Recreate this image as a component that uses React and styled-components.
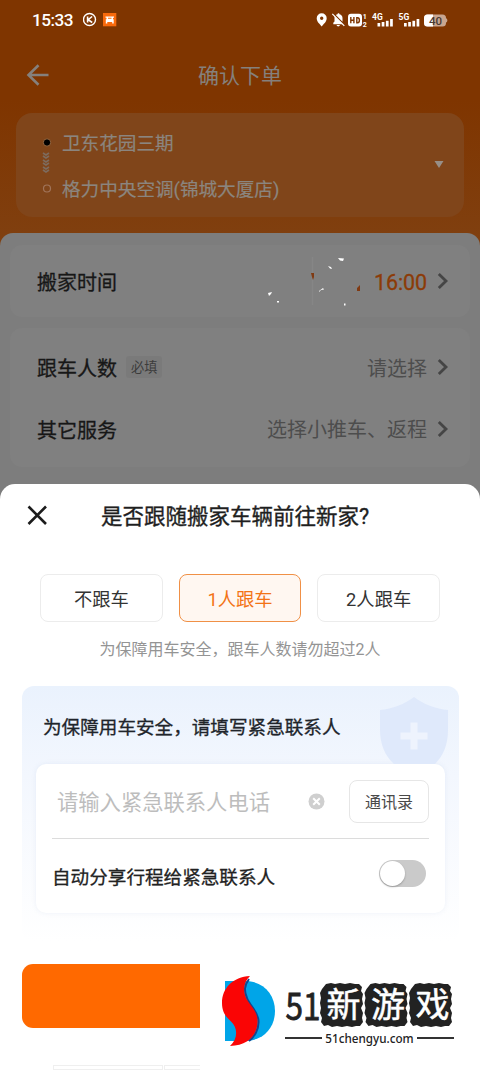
import React, { useState } from "react";
import styled, { createGlobalStyle } from "styled-components";

const GlobalStyle = createGlobalStyle`
  * {
    box-sizing: border-box;
  }
  body {
    margin: 0;
    font-family: Roboto, "Noto Sans CJK SC", sans-serif;
    background: #fff;
  }
  svg {
    display: block;
    flex: none;
  }
`;

const Screen = styled.div`
  position: relative;
  width: 480px;
  height: 1070px;
  overflow: hidden;
  background: linear-gradient(#7f3500 0, #7f3500 100px, #804010 245px, #7d7d7d 246px);
  display: flex;
  flex-direction: column;
  white-space: nowrap;
`;

const StatusBar = styled.div`
  height: 38px;
  padding: 1px 32px 0;
  display: flex;
  align-items: center;
  color: #fff;
`;

const Clock = styled.span`
  width: 51px;
  font-size: 17.2px;
  font-weight: 500;
  letter-spacing: -0.5px;
`;

const NavBar = styled.header`
  height: 75px;
  display: grid;
  grid-template-columns: 75px 1fr 75px;
  align-items: center;
  color: #85807c;
  svg {
    margin: -2px 0 0 26px;
  }
`;

const NavTitle = styled.h1`
  margin: 0;
  font-size: 21px;
  line-height: 30px;
  font-weight: 400;
  text-align: center;
`;

const AddressCard = styled.section`
  height: 104px;
  flex: none;
  margin: 0 16px;
  padding: 7px 20px 4px 26px;
  border-radius: 16px;
  background: #80451a;
  display: flex;
  align-items: center;
  color: #8b857f;
`;

const AddressList = styled.div`
  flex: 1;
  margin: 1px 0 0 10px;
  font-size: 18.6px;
  line-height: 46px;
  -webkit-text-stroke: 0.2px #8b857f;
`;

const Order = styled.main`
  flex: none;
  height: 260px;
  margin-top: 16px;
  padding: 12px 10px;
  border-radius: 13px 13px 0 0;
  background: #7d7d7d;
  display: flex;
  flex-direction: column;
  gap: 11px;
`;

const OrderCard = styled.div`
  border-radius: 12px;
  background: #808080;
  padding: ${(p) => p.$pad || "0"} 21px ${(p) => p.$pad || "0"} 27px;
`;

const OrderRow = styled.div`
  height: ${(p) => p.$height}px;
  display: flex;
  align-items: center;
`;

const Label = styled.span`
  padding-top: 4px;
  font-size: 20px;
  line-height: 30px;
  color: #171717;
  -webkit-text-stroke: 0.3px #171717;
`;

const Tag = styled.span`
  margin-left: 9px;
  padding: 0 5px;
  height: 22px;
  line-height: 23px;
  font-size: 13.2px;
  color: #3c3c3c;
  background: #7a7a7a;
  border-radius: 3px;
`;

const Value = styled.span`
  margin-left: auto;
  margin-right: 10px;
  display: flex;
  align-items: center;
  font-size: 20px;
  color: #4d4d4d;
`;

const Time = styled.span`
  margin-left: 9px;
  padding-top: 3px;
  width: 53px;
  font-size: 21.5px;
  line-height: 30px;
  letter-spacing: -0.1px;
  color: #8c3b07;
  -webkit-text-stroke: 0.3px #8c3b07;
`;

const Sheet = styled.section`
  position: absolute;
  left: 0;
  right: 0;
  top: 484px;
  bottom: 0;
  border-radius: 15px 15px 0 0;
  background: #fff;
`;

const SheetHeader = styled.div`
  height: 63px;
  padding-left: 27px;
  display: flex;
  align-items: center;
`;

const SheetTitle = styled.h2`
  margin: 3px 0 0 52px;
  font-size: 21.5px;
  line-height: 30px;
  font-weight: 400;
  color: #1f1f1f;
  -webkit-text-stroke: 0.35px #1f1f1f;
`;

const Choices = styled.div`
  margin: 27px 40px 0;
  display: grid;
  grid-template-columns: repeat(3, 1fr);
  gap: 16px;
`;

const Choice = styled.button`
  height: 48px;
  padding: 0;
  font: inherit;
  font-size: 18.3px;
  border-radius: 8px;
  border: 1px solid ${(p) => (p.$active ? "#f09046" : "#ececec")};
  background: ${(p) => (p.$active ? "#fff7f1" : "#fff")};
  color: ${(p) => (p.$active ? "#f37316" : "#333")};
`;

const Hint = styled.p`
  margin: 16px 0 0;
  text-align: center;
  font-size: 16px;
  line-height: 24px;
  color: #949494;
`;

const Contact = styled.div`
  margin: 24px 21px 0 22px;
  height: 256px;
  padding: 0 14px;
  border-radius: 12px;
  background: linear-gradient(#eaf2fd, #f3f7fe 35%, #fff);
  overflow: hidden;
`;

const ContactHeader = styled.div`
  height: 78px;
  padding-left: 7px;
  display: flex;
  align-items: center;
  justify-content: space-between;
  font-size: 18.6px;
  color: #20242a;
  -webkit-text-stroke: 0.3px #20242a;
  svg {
    align-self: flex-end;
    margin-right: -4px;
  }
`;

const ContactTitle = styled.span`
  padding-top: 1px;
`;

const ContactForm = styled.div`
  height: 149px;
  padding: 0 16px;
  border-radius: 10px;
  background: #fff;
  box-shadow: 0 0 5px rgba(120, 150, 200, 0.12);
`;

const PhoneRow = styled.div`
  height: 75px;
  padding-left: 5px;
  display: flex;
  align-items: center;
  border-bottom: 1px solid #dcdcdc;
`;

const Placeholder = styled.span`
  flex: 1;
  font-size: 21.3px;
  line-height: 30px;
  padding-top: 4px;
  color: #bdbdbd;
`;

const BookButton = styled.button`
  width: 80px;
  height: 43px;
  margin-left: 24px;
  padding: 0;
  font: inherit;
  font-size: 16px;
  color: #4a4a4a;
  background: #fff;
  border: 1px solid #e6e6e6;
  border-radius: 8px;
`;

const ShareRow = styled.div`
  height: 73px;
  padding: 0 3px 0 0;
  display: flex;
  align-items: center;
  justify-content: space-between;
  font-size: 18.6px;
  color: #222;
  -webkit-text-stroke: 0.3px #222;
`;

const Switch = styled.button`
  width: 47px;
  height: 27px;
  margin-top: -4px;
  padding: 1px;
  border: 0;
  border-radius: 14px;
  background: #cacaca;
  display: flex;
  justify-content: ${(p) => (p.$on ? "flex-end" : "flex-start")};
`;

const Knob = styled.span`
  width: 25px;
  height: 25px;
  border-radius: 50%;
  background: #fff;
  box-shadow: 0 1px 2px rgba(0, 0, 0, 0.25);
`;

const Submit = styled.div`
  margin: 22px 22px 0;
  height: 64px;
  border-radius: 11px;
  background: #ff6900;
`;

const BottomTabs = styled.div`
  margin: 37px 0 0 53px;
  width: 260px;
  height: 5px;
  display: grid;
  grid-template-columns: 110px 1fr;
  gap: 1px;
  span {
    border: 1px solid #efefef;
  }
`;

const Watermark = styled.div`
  position: absolute;
  left: 200px;
  top: 956px;
  width: 280px;
  height: 114px;
  padding: 20px 26px 0 22px;
  background: #fff;
  display: flex;
  color: #222;
`;

const Brand = styled.div`
  margin: 0 0 0 8px;
  width: 170px;
`;

const BrandSite = styled.div`
  margin: -4px 0 0 1px;
  display: flex;
  align-items: center;
  gap: 3px;
  font: 500 11.7px/16px "Noto Sans", sans-serif;
  &::before,
  &::after {
    content: "";
    flex: 1;
    height: 2px;
    background: #333;
  }
`;

const StatusLeft = () => (
  <svg width="34" height="16" viewBox="0 0 34 16">
    <circle cx="6.500" cy="7.500" r="6" fill="none" stroke="#fff" strokeWidth="1.400" />
    <path d="M4.600 4.500v6M9.100 4.500 5.200 7.700l4 2.800" fill="none" stroke="#fff" strokeWidth="1.600" />
    <rect x="20" y="1" width="13.300" height="13.300" fill="#f96a0c" />
    <path d="M22.500 4.500h8.500v1.300h-1v1.400h.7v4.300h-1.500V10h-4.900v1.500h-1.500V7.200h.7V5.800h-1zM25 5.800v1h3.500v-1z" fill="#fff" fillRule="evenodd" />
  </svg>
);

const StatusRight = () => (
  <svg width="132" height="18" viewBox="0 0 132 18" style={{ marginLeft: "auto" }} fill="#fff">
    <path d="M5.700 2.300a5 5 0 0 0-5 5c0 3.800 3.400 5.800 5 8.300 1.600-2.500 5-4.500 5-8.300a5 5 0 0 0-5-5zm0 3.300a1.700 1.700 0 1 1 0 3.400 1.700 1.700 0 0 1 0-3.400z" fillRule="evenodd" />
    <path d="m18.200 4.500 8.800 8.800h-9.700v-1.500l1.200-1.400V6.200zM19.800 4c.6-.5 1.100-.7 1.700-.8 0-1.200 2-1.200 2 0 2 .5 3 1.900 3 3.900v3.600zM20.500 14h3.500c-.5 1.900-3 1.900-3.500 0z" />
    <path d="m16.300 2.800 12 12" stroke="#fff" strokeWidth="1.200" />
    <rect x="32" y="2.800" width="14" height="12.700" rx="3" />
    <path d="M34.800 6v6.300M37.900 6v6.300M34.800 9.200h3M40.800 6.700v5h.8c2.400 0 2.400-5 0-5z" stroke="#7f3500" strokeWidth="1.400" fill="none" />
    <g fontFamily="Roboto, sans-serif" fontWeight="700">
      <text x="46.700" y="8" fontSize="7">1</text>
      <text x="46.700" y="15.500" fontSize="7">2</text>
      <text x="56" y="8.700" fontSize="8.500">4G</text>
      <text x="82.500" y="8.700" fontSize="8.500">5G</text>
    </g>
    {[61.5, 88].map((x) => (
      <g key={x}>
        <rect x={x} y="12" width="2.700" height="3.500" />
        <rect x={x + 4.2} y="11" width="2.700" height="4.500" />
        <rect x={x + 8.4} y="9.800" width="2.700" height="5.700" />
        <rect x={x + 12.6} y="8" width="2.700" height="7.500" />
      </g>
    ))}
    <rect x="108" y="3.500" width="22" height="12" rx="3.500" fill="#c9a690" />
    <path d="M111.500 3.500h5.500v12h-5.500a3.500 3.500 0 0 1-3.500-3.500V7a3.500 3.500 0 0 1 3.500-3.500z" />
    <path d="M130 7.300c1.800.5 1.800 3.800 0 4.300z" fill="#c9a690" />
    <text x="113" y="13.600" fontSize="11.500" fontWeight="500" fontFamily="Roboto, sans-serif" fill="#4b3a32">40</text>
  </svg>
);

const BackArrow = () => (
  <svg width="24" height="22" viewBox="0 0 24 22" fill="none" stroke="currentColor" strokeWidth="2.600">
    <path d="M22.500 11H2.500M12.500 1.300 2.500 11l10 9.700" />
  </svg>
);

const RouteMarks = () => (
  <svg width="10" height="58" viewBox="0 0 10 58" fill="none">
    <circle cx="5" cy="4.500" r="3.700" fill="#000" stroke="#99683f" strokeWidth="1" />
    <path d="m1 15 3 2 3-2M1 18l3 2 3-2M1 22l3 2 3-2M1 25l3 2 3-2M1 29l3 2 3-2M1 32l3 2 3-2" stroke="#7d6b5e" strokeWidth="1.600" />
    <circle cx="5" cy="50.500" r="3.500" stroke="#a0745a" strokeWidth="1.200" />
  </svg>
);

const Chevron = () => (
  <svg width="12" height="18" viewBox="0 0 12 18" fill="none" stroke="#454545" strokeWidth="2.800">
    <path d="m1.800 2 7.200 7-7.200 7" />
  </svg>
);

const Specks = () => (
  <svg width="100" height="54" viewBox="0 2 100 54" fill="#fff">
    <path d="M47.500 5v48" stroke="#8b8b8b" strokeWidth="1.500" opacity=".6" />
    <path d="M3 41l4-1-1 2-2 2zM12 49h2v1.500h-2zM63 14l3 1 1 2-2-.5zM73 6l6 .5-1 2.500-3-.5zM54 39l4-3 1 1.500-3 .5-2 2zM79 51.500h1.500v2H79z" />
    <path d="M46 21h3v4l-1 3-1-3zM92 36l3-3v6h-3z" fill="#803a12" />
  </svg>
);

const Shield = () => (
  <svg width="70" height="67" viewBox="0 0 70 67">
    <path d="M35 0c9 7 22 12 34 13v20c0 15-5 26-13 34H15C6 59 1 47 1 33V13C13 12 26 7 35 0z" fill="#dfe9fb" />
    <path d="M35 25.500v27M21.500 39h27" stroke="#eef3fd" strokeWidth="7" />
  </svg>
);

const ClearIcon = () => (
  <svg width="17" height="17" viewBox="0 0 17 17">
    <circle cx="8.500" cy="8.500" r="8" fill="#cfcfcf" />
    <path d="m5.200 5.200 6.600 6.600m0-6.600-6.600 6.600" stroke="#fff" strokeWidth="2" />
  </svg>
);

const BrandLogo = () => (
  <svg width="54" height="72" viewBox="0 0 54 72">
    <path d="M3 5h20c18 0 30 13 30 30S41 65 23 65H3z" fill="#00a5e8" />
    <path d="M27 3c-5 7-5 12-2 19 3 8 11 13 11.500 23 .5 8-4 16-9.500 20" fill="none" stroke="#12478f" strokeWidth="2" />
    <path d="M28 0C11 1 0 12 0 27c0 9 4 14 9 18.500 7 6 7 18-1 24.500 17 0 26.500-10 27.500-23 1-11-7-17-11-24-4-8-3-17 3.500-23z" fill="#fa0505" />
  </svg>
);

const TILE =
  "M3 1 8 0l4 1 5-1 5 1 5-1 5 1 4 0 3 3-1 4 2 3-1 5 1 5-2 4 2 5-1 5 1 4-3 4-4 0-4 1-5-1-5 1-5-1-5 1-4-2-4 1-3-4 1-4-2-5 1-5-1-5 1-5-1-5 2-4z";

const BrandName = () => (
  <svg width="173" height="58" viewBox="0 0 173 58" fontFamily="Noto Sans CJK SC, sans-serif">
    <text x="1.500" y="44" fontSize="38" textLength="35" lengthAdjust="spacingAndGlyphs" fill="#222" stroke="#222" strokeWidth=".8">
      51
    </text>
    {["新", "游", "戏"].map((char, i) => (
      <g key={char} transform={`translate(${i * 44.5 + 37.5} 7)`}>
        <path d={TILE} transform="translate(1.500 0)" fill="#222" />
        <text x="22" y="34" textAnchor="middle" fontSize="34" fill="#fff" stroke="#fff" strokeWidth=".5">
          {char}
        </text>
      </g>
    ))}
  </svg>
);

const choices = ["不跟车", "1人跟车", "2人跟车"];

export default function App() {
  const [selected, setSelected] = useState(1);
  const [share, setShare] = useState(false);

  return (
    <>
      <GlobalStyle />
      <Screen>
        <StatusBar>
          <Clock>15:33</Clock>
          <StatusLeft />
          <StatusRight />
        </StatusBar>
        <NavBar>
          <BackArrow />
          <NavTitle>确认下单</NavTitle>
        </NavBar>
        <AddressCard>
          <RouteMarks />
          <AddressList>
            <div>卫东花园三期</div>
            <div>格力中央空调(锦城大厦店)</div>
          </AddressList>
          <svg width="10" height="14" viewBox="0 0 10 14">
            <path d="M.5 1h9L5 8z" fill="#978f88" />
          </svg>
        </AddressCard>
        <Order>
          <OrderCard>
            <OrderRow $height={72}>
              <Label>搬家时间</Label>
              <Value>
                <Specks />
                <Time>16:00</Time>
              </Value>
              <Chevron />
            </OrderRow>
          </OrderCard>
          <OrderCard $pad="8px">
            <OrderRow $height={62}>
              <Label>跟车人数</Label>
              <Tag>必填</Tag>
              <Value>请选择</Value>
              <Chevron />
            </OrderRow>
            <OrderRow $height={61}>
              <Label>其它服务</Label>
              <Value>选择小推车、返程</Value>
              <Chevron />
            </OrderRow>
          </OrderCard>
        </Order>

        <Sheet>
          <SheetHeader>
            <svg width="22" height="22" viewBox="0 0 22 22">
              <path d="m1.500 1.500 17.500 17.500m0-17.500L1.500 19" stroke="#1c1c1c" strokeWidth="2.600" />
            </svg>
            <SheetTitle>是否跟随搬家车辆前往新家?</SheetTitle>
          </SheetHeader>
          <Choices>
            {choices.map((text, i) => (
              <Choice key={text} $active={i === selected} onClick={() => setSelected(i)}>
                {text}
              </Choice>
            ))}
          </Choices>
          <Hint>为保障用车安全，跟车人数请勿超过2人</Hint>
          <Contact>
            <ContactHeader>
              <ContactTitle>为保障用车安全，请填写紧急联系人</ContactTitle>
              <Shield />
            </ContactHeader>
            <ContactForm>
              <PhoneRow>
                <Placeholder>请输入紧急联系人电话</Placeholder>
                <ClearIcon />
                <BookButton>通讯录</BookButton>
              </PhoneRow>
              <ShareRow>
                自动分享行程给紧急联系人
                <Switch $on={share} onClick={() => setShare(!share)}>
                  <Knob />
                </Switch>
              </ShareRow>
            </ContactForm>
          </Contact>
          <Submit />
          <BottomTabs>
            <span />
            <span />
          </BottomTabs>
        </Sheet>

        <Watermark>
          <BrandLogo />
          <Brand>
            <BrandName />
            <BrandSite>51chengyu.com</BrandSite>
          </Brand>
        </Watermark>
      </Screen>
    </>
  );
}
